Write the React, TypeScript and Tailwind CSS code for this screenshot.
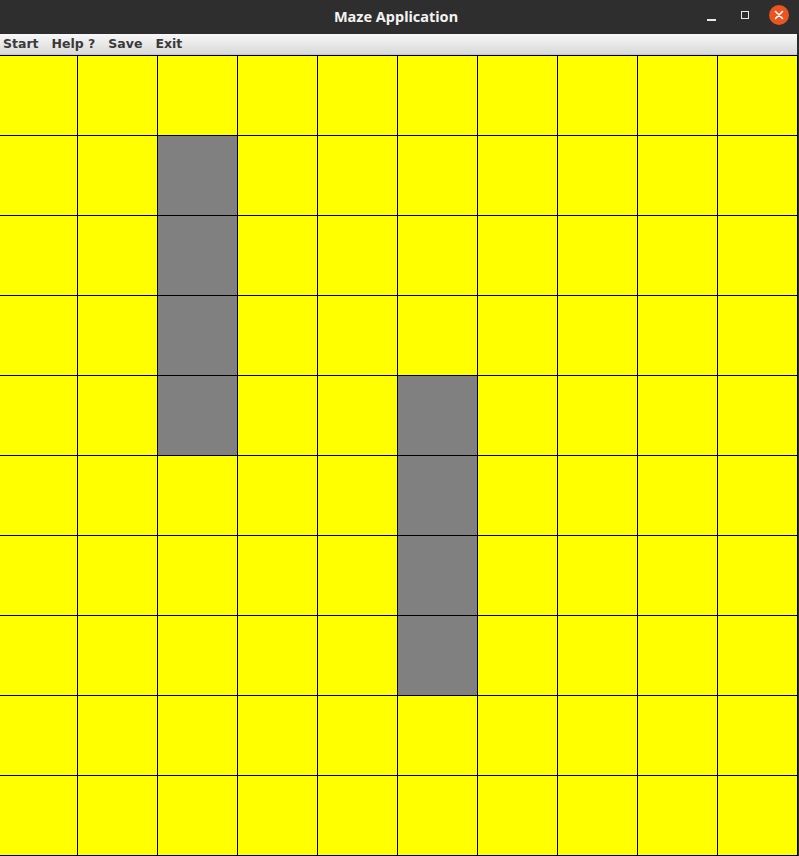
import React from "react";

const gray = new Set<string>([
  "1-2", "2-2", "3-2", "4-2",
  "4-5", "5-5", "6-5", "7-5",
]);

export default function App() {
  const cells: JSX.Element[] = [];
  for (let r = 0; r < 10; r++) {
    for (let c = 0; c < 10; c++) {
      const isGray = gray.has(`${r}-${c}`);
      cells.push(
        <div
          key={`${r}-${c}`}
          className={isGray ? "bg-[#808080]" : "bg-[#ffff00]"}
        />
      );
    }
  }
  return (
    <div className="w-[799px] h-[856px] bg-[#2b2b2b] flex flex-col overflow-hidden">
      <div className="h-[34px] bg-[#2f2e2e] relative flex items-center justify-center shrink-0 pb-[2px]">
        <span
          className="text-[14.5px] font-bold text-[#f2f2f2] leading-none pr-[7px]"
          style={{ fontFamily: '"Noto Sans", "DejaVu Sans", sans-serif' }}
        >
          Maze Application
        </span>
        <div className="absolute left-[707px] top-[19px] w-[9px] h-[1.5px] bg-[#e8e8e8]" />
        <div className="absolute left-[741px] top-[11px] w-[8px] h-[8px] border-[1.5px] border-[#e8e8e8]" />
        <div className="absolute left-[769px] top-[5px] w-[20px] h-[20px] rounded-full bg-[#e95420] flex items-center justify-center">
          <svg width="10" height="10" viewBox="0 0 10 10">
            <path d="M1.5 1.5 L8.5 8.5 M8.5 1.5 L1.5 8.5" stroke="#ffffff" strokeWidth="1.6" strokeLinecap="round" />
          </svg>
        </div>
      </div>
      <div
        className="h-[21px] w-[797px] shrink-0 bg-gradient-to-b from-[#f8f8f8] to-[#d9d9d9] border-b border-[#c8c8c8] flex items-center gap-[13px] pl-[3px] text-[12.5px] font-bold text-[#3a3a3a]"
        style={{ fontFamily: '"DejaVu Sans", "Noto Sans", sans-serif' }}
      >
        <span>Start</span>
        <span>Help ?</span>
        <span>Save</span>
        <span>Exit</span>
      </div>
      <div className="grid grid-cols-[77px_repeat(9,79px)] grid-rows-[repeat(10,79px)] gap-px pt-px pb-px pr-px bg-black w-[798px] shrink-0">
        {cells}
      </div>
    </div>
  );
}
